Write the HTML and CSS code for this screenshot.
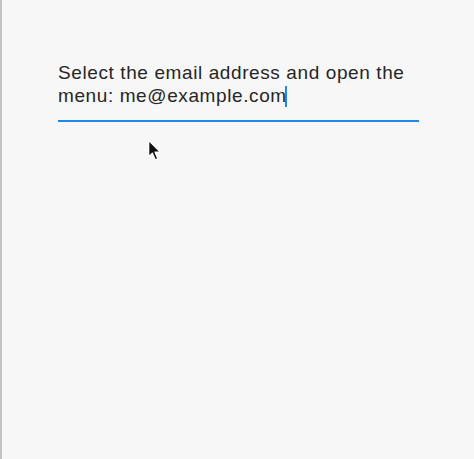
FILE: index.html
```html
<!DOCTYPE html>
<html>
<head>
<meta charset="utf-8">
<link rel="stylesheet" href="styles.css">
</head>
<body>
<div class="frame">
  <div class="field">
    <div class="text">Select the email address and open the menu: me@example.com<span class="caret"></span></div>
    <div class="underline"></div>
  </div>
  <svg class="pointer" width="15" height="23" viewBox="0 0 14 21">
    <path d="M1.5 1 L1.5 16.5 L5 13 L7.6 19.2 L10.2 18.1 L7.6 12 L12.5 12 Z" fill="#111" stroke="#fff" stroke-width="1.3" stroke-linejoin="round"/>
  </svg>
</div>
</body>
</html>
```
FILE: styles.css
```css
html, body {
  margin: 0;
  padding: 0;
}
body {
  width: 474px;
  height: 459px;
  background: #f7f7f7;
  overflow: hidden;
}
.frame {
  position: relative;
  width: 472px;
  height: 459px;
  border-left: 2px solid #c4c4c4;
  background: #f7f7f7;
  box-sizing: border-box;
  padding: 61px 0 0 56px;
}
.field {
  width: 361px;
}
.text {
  font-family: "Liberation Sans", Arial, sans-serif;
  font-size: 19px;
  letter-spacing: 0.6px;
  line-height: 23px;
  color: #262626;
  padding-bottom: 13px;
}
.caret {
  display: inline-block;
  width: 2px;
  height: 21px;
  background: #1e88e5;
  vertical-align: -5px;
  margin-left: -2px;
}
.underline {
  height: 2px;
  background: #1e88e5;
}
.pointer {
  position: absolute;
  left: 145px;
  top: 139px;
}
```
